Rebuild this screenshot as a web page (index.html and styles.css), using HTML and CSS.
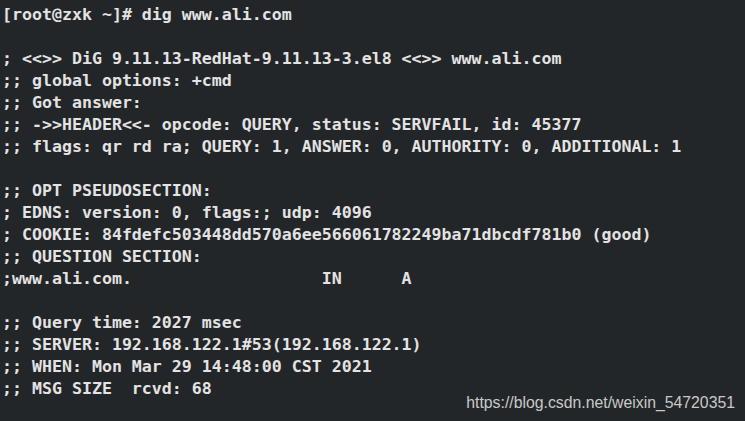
FILE: index.html
```html
<!DOCTYPE html>
<html>
<head>
<meta charset="utf-8">
<link rel="stylesheet" href="styles.css">
</head>
<body>
<pre class="term">[root@zxk ~]# dig www.ali.com

; &lt;&lt;&gt;&gt; DiG 9.11.13-RedHat-9.11.13-3.el8 &lt;&lt;&gt;&gt; www.ali.com
;; global options: +cmd
;; Got answer:
;; -&gt;&gt;HEADER&lt;&lt;- opcode: QUERY, status: SERVFAIL, id: 45377
;; flags: qr rd ra; QUERY: 1, ANSWER: 0, AUTHORITY: 0, ADDITIONAL: 1

;; OPT PSEUDOSECTION:
; EDNS: version: 0, flags:; udp: 4096
; COOKIE: 84fdefc503448dd570a6ee566061782249ba71dbcdf781b0 (good)
;; QUESTION SECTION:
;www.ali.com.                   IN      A

;; Query time: 2027 msec
;; SERVER: 192.168.122.1#53(192.168.122.1)
;; WHEN: Mon Mar 29 14:48:00 CST 2021
;; MSG SIZE  rcvd: 68</pre>
<div class="mark">https://blog.csdn.net/weixin_54720351</div>
</body>
</html>
```
FILE: styles.css
```css
html, body {
  margin: 0;
  padding: 0;
  background: #232629;
  width: 745px;
  height: 421px;
  overflow: hidden;
}
body {
  position: relative;
}
.term {
  display: inline-block;
  margin: 0;
  padding: 4px 0 0 2px;
  font-family: "DejaVu Sans Mono", monospace;
  font-weight: bold;
  font-size: 16.6px;
  line-height: 22px;
  color: #e3e3e3;
  white-space: pre;
}
.mark {
  position: absolute;
  right: 10px;
  bottom: 9px;
  font-family: "Liberation Sans", Arial, sans-serif;
  font-size: 15.8px;
  color: #c9c9c9;
}
```
